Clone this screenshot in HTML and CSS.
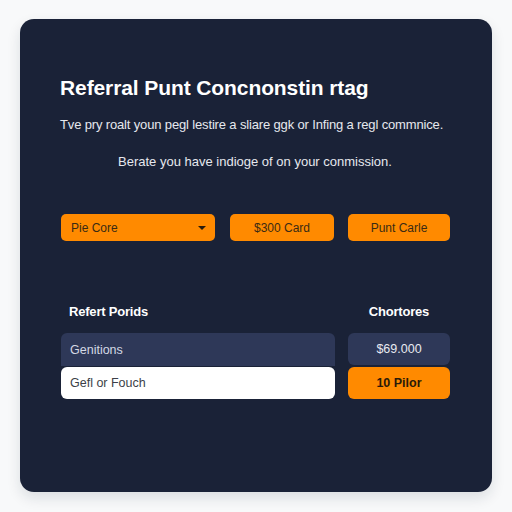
FILE: index.html
```html
<!DOCTYPE html>
<html>
<head>
<meta charset="utf-8">
<link rel="stylesheet" href="styles.css">
</head>
<body>
<div class="card">
  <h1 class="title">Referral Punt Concnonstin rtag</h1>
  <p class="lead">Tve pry roalt youn pegl lestire a sliare ggk or Infing a regl commnice.</p>
  <p class="sub">Berate you have indioge of on your conmission.</p>
  <div class="controls">
    <div class="select"><span>Pie Core</span><span class="caret"></span></div>
    <div class="btn btn-card">$300 Card</div>
    <div class="btn btn-punt">Punt Carle</div>
  </div>
  <div class="table">
    <div class="th th-left">Refert Porids</div>
    <div class="th th-right">Chortores</div>
    <div class="cell cell-dark">Genitions</div>
    <div class="cell cell-dark-r">$69.000</div>
    <div class="cell cell-white">Gefl or Fouch</div>
    <div class="cell cell-orange">10 Pilor</div>
  </div>
</div>
</body>
</html>
```
FILE: styles.css
```css
* { box-sizing: border-box; }
html, body { margin: 0; padding: 0; }
body {
  background: #f8f9fa;
  font-family: "Liberation Sans", "Inter", sans-serif;
  width: 512px;
  height: 512px;
  padding: 19px 20px 0 20px;
}
.card {
  width: 472px;
  height: 473px;
  background: #1a2237;
  border-radius: 14px;
  box-shadow: 0 6px 14px rgba(20, 30, 50, 0.12);
  padding: 56px 42px 0 40px;
}
.title {
  margin: 0;
  color: #ffffff;
  font-size: 21px;
  font-weight: 700;
  letter-spacing: -0.1px;
  line-height: 26px;
  white-space: nowrap;
}
.lead {
  margin: 16px 0 0 0;
  color: #e6e8ee;
  font-size: 13px;
  line-height: 16px;
  letter-spacing: -0.15px;
  white-space: nowrap;
}
.sub {
  margin: 21px 0 0 0;
  text-align: center;
  color: #e6e8ee;
  font-size: 13px;
  line-height: 16px;
  white-space: nowrap;
}
.controls {
  display: flex;
  margin: 44px 0 0 1px;
  gap: 14px;
}
.select, .btn {
  height: 27px;
  background: #ff8a00;
  border-radius: 5px;
  color: #3a2a14;
  font-size: 12px;
  display: flex;
  align-items: center;
}
.select {
  width: 154px;
  justify-content: space-between;
  padding: 0 9px 0 10px;
}
.caret {
  width: 0; height: 0;
  border-left: 4px solid transparent;
  border-right: 4px solid transparent;
  border-top: 4px solid #2a1c0c;
}
.btn { justify-content: center; }
.btn-card { width: 104px; margin-left: 1px; }
.btn-punt { width: 102px; }
.table {
  margin: 59px 0 0 1px;
  display: grid;
  grid-template-columns: 274px 102px;
  column-gap: 13px;
  grid-template-rows: 33px 33px 33px;
}
.th {
  color: #ffffff;
  font-size: 13px;
  font-weight: 700;
  letter-spacing: -0.2px;
  padding-top: 4px;
}
.th-left { padding-left: 8px; }
.th-right { text-align: center; }
.cell {
  display: flex;
  align-items: center;
  font-size: 12.5px;
}
.cell-dark {
  background: #2e3858;
  border-radius: 6px 6px 0 0;
  color: #d4d8e4;
  padding-left: 9px;
}
.cell-dark-r {
  background: #2e3858;
  border-radius: 6px;
  color: #e8eaf0;
  justify-content: center;
  margin-bottom: 1px;
}
.cell-white {
  background: #ffffff;
  border-radius: 6px;
  color: #3c3f48;
  padding-left: 9px;
  margin-top: 1px;
}
.cell-orange {
  background: #ff8a00;
  border-radius: 6px;
  color: #2a1a08;
  font-weight: 700;
  justify-content: center;
  margin-top: 1px;
}
```
